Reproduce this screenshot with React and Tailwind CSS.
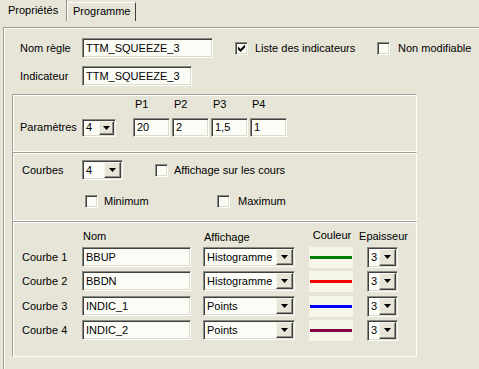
/**
 * Rule properties dialog page (Propriétés tab) with indicator parameters
 * and curve settings, drawn in the classic Windows look.
 */

const etched =
  'border-t border-l border-r border-b border-t-[#a09f94] border-l-[#a09f94] border-r-white border-b-white shadow-[inset_1px_1px_0_#ffffff]';
const sunken =
  'border border-t-[#8b8b83] border-l-[#8b8b83] border-r-[#fdfdf8] border-b-[#fdfdf8] shadow-[inset_1px_1px_0_#404040,inset_-1px_-1px_0_#dcdbd0] bg-[#fcfcf7]';
const raised =
  'bg-[#e6e5d7] border border-t-[#f6f6ee] border-l-[#f6f6ee] border-r-[#404040] border-b-[#404040] shadow-[inset_-1px_-1px_0_#8f8f86]';

const CURVES = [
  { label: 'Courbe 1', name: 'BBUP', mode: 'Histogramme', line: 'bg-[#008000]', gap: 'mt-0' },
  { label: 'Courbe 2', name: 'BBDN', mode: 'Histogramme', line: 'bg-[#ff0000]', gap: 'mt-[4px]' },
  { label: 'Courbe 3', name: 'INDIC_1', mode: 'Points', line: 'bg-[#0000ff]', gap: 'mt-[5px]' },
  { label: 'Courbe 4', name: 'INDIC_2', mode: 'Points', line: 'bg-[#800040]', gap: 'mt-[4px]' },
];

const PARAMS = ['20', '2', '1,5', '1'];

function Field({ className = '', children }) {
  return (
    <div className={`${sunken} flex items-center pl-[3px] whitespace-nowrap ${className}`}>
      {children}
    </div>
  );
}

function Arrow() {
  return (
    <svg width="7" height="4" viewBox="0 0 7 4">
      <path d="M0 0h7L3.5 4z" fill="#000" />
    </svg>
  );
}

function Combo({ value, className = '', btnClass = 'w-[16px]' }) {
  return (
    <div className={`${sunken} flex items-stretch ${className}`}>
      <span className="flex-1 min-w-0 flex items-center pl-[3px] overflow-hidden whitespace-nowrap">
        {value}
      </span>
      <span className={`${raised} ${btnClass} m-[1px] shrink-0 flex items-center justify-center`}>
        <Arrow />
      </span>
    </div>
  );
}

function Check({ checked = false }) {
  return (
    <span className={`${sunken} w-[13px] h-[13px] shrink-0 flex items-center justify-center`}>
      {checked && (
        <svg width="7" height="8" viewBox="0 0 7 8">
          <path d="M0 2.5L2.5 5L7 0.5V3.5L2.5 8L0 5.5z" fill="#000" />
        </svg>
      )}
    </span>
  );
}

export default function App() {
  return (
    <div className="w-[479px] h-[369px] overflow-hidden bg-[#e6e5d7] text-[11px] leading-[13px] text-black font-['Liberation_Sans',Arial,sans-serif]">
      {/* Tabs */}
      <div className="flex h-[21px]">
        <div className="w-[67px] h-[21px] border-r border-r-[#8f8f86] pl-[8px] pt-[4px]">Propriétés</div>
        <div className="mt-[2px] w-[69px] h-[19px] border-t border-l border-r border-t-white border-l-white border-r-[#404040] pl-[5px] pt-[2px]">
          Programme
        </div>
      </div>

      {/* Page */}
      <div className={`mt-[6px] ml-[3px] w-[477px] h-[400px] ${etched}`}>
        <div className="pt-[10px]">
          <div className="pl-[16px]">
            <div className="flex items-center h-[20px]">
              <span className="w-[62px]">Nom règle</span>
              <Field className="w-[131px] h-[20px]">TTM_SQUEEZE_3</Field>
              <label className="ml-[22px] w-[142px] flex items-center gap-[7px]">
                <Check checked />
                Liste des indicateurs
              </label>
              <label className="flex items-center gap-[8px] whitespace-nowrap">
                <Check />
                Non modifiable
              </label>
            </div>
            <div className="flex items-center h-[20px] mt-[8px]">
              <span className="w-[62px]">Indicateur</span>
              <Field className="w-[110px] h-[20px]">TTM_SQUEEZE_3</Field>
            </div>
          </div>

          <div className="ml-[8px] mt-[8px] w-[405px]">
            {/* Paramètres */}
            <div className={`${etched} h-[58px] flex pt-[3px] pl-[7px]`}>
              <div className="flex items-center mt-[20px] h-[19px]">
                <span className="w-[62px]">Paramètres</span>
                <Combo value="4" className="w-[34px] h-[18px]" btnClass="w-[15px]" />
              </div>
              <div className="flex ml-[17px] gap-[2px]">
                {PARAMS.map((v, i) => (
                  <div key={i} className="w-[37px]">
                    <div className="pl-[2px] h-[13px]">P{i + 1}</div>
                    <Field className="mt-[7px] h-[19px]">{v}</Field>
                  </div>
                ))}
              </div>
            </div>

            {/* Courbes */}
            <div className={`${etched} h-[69px] pt-[7px]`}>
              <div className="flex items-center h-[20px] pl-[9px]">
                <span className="w-[60px]">Courbes</span>
                <Combo value="4" className="w-[41px] h-[20px]" btnClass="w-[17px]" />
                <label className="ml-[32px] flex items-center gap-[6px]">
                  <Check />
                  Affichage sur les cours
                </label>
              </div>
              <div className="flex items-center h-[13px] mt-[15px] pl-[72px]">
                <label className="w-[132px] flex items-center gap-[6px]">
                  <Check />
                  Minimum
                </label>
                <label className="flex items-center gap-[8px]">
                  <Check />
                  Maximum
                </label>
              </div>
            </div>

            {/* Détail des courbes */}
            <div className={`${etched} h-[136px] pt-[8px]`}>
              <div className="flex h-[13px]">
                <span className="w-[70px]" />
                <span className="w-[121px]">Nom</span>
                <span className="w-[106px] mt-[1px]">Affichage</span>
                <span className="w-[44px] flex justify-center -mt-[1px]">Couleur</span>
                <span className="ml-[14px] w-[31px] flex justify-center whitespace-nowrap">Epaisseur</span>
              </div>
              <div className="mt-[4px] flex flex-col">
                {CURVES.map((c) => (
                  <div key={c.label} className={`flex items-center h-[20px] pl-[9px] ${c.gap}`}>
                    <span className="w-[60px]">{c.label}</span>
                    <Field className="w-[109px] h-[20px]">{c.name}</Field>
                    <Combo value={c.mode} className="ml-[12px] w-[92px] h-[20px]" btnClass="w-[17px]" />
                    <div className="ml-[14px] w-[44px] h-[21px] bg-[#f7f7e9] flex items-center px-[1px]">
                      <div className={`h-[3px] w-full ${c.line}`} />
                    </div>
                    <Combo value="3" className="ml-[14px] w-[31px] h-[21px]" btnClass="w-[17px]" />
                  </div>
                ))}
              </div>
            </div>
          </div>
        </div>
      </div>
    </div>
  );
}
